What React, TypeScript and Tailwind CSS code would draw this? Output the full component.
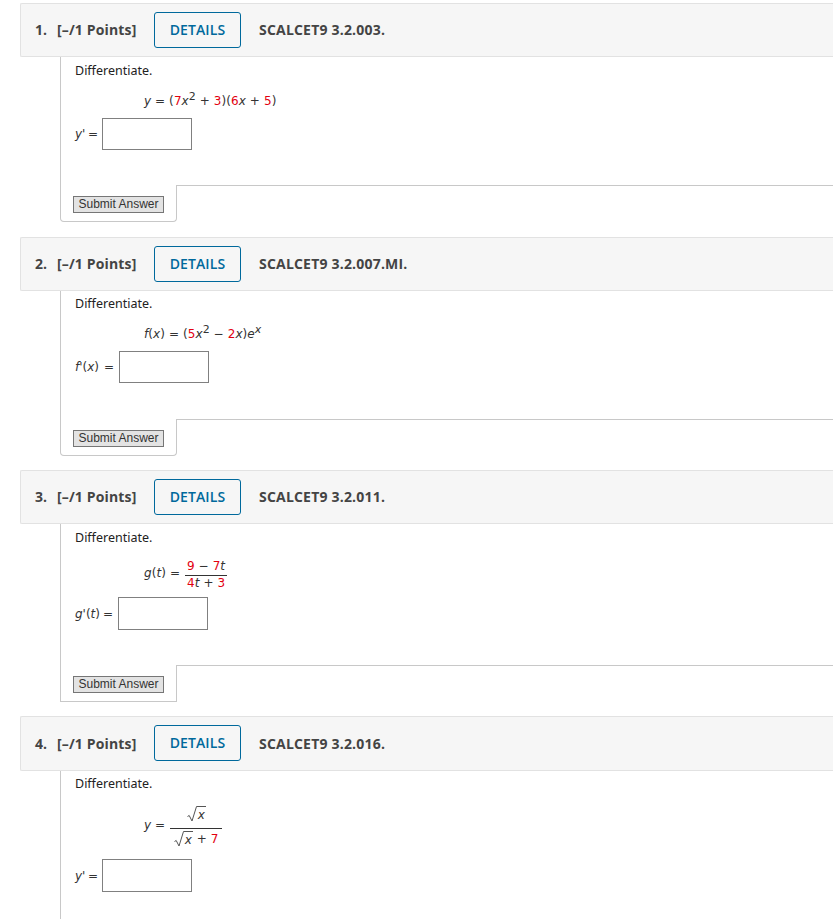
import React from 'react';

const R = ({ children }: { children: React.ReactNode }) => <span className="text-[#e3000f]">{children}</span>;
const V = ({ children }: { children: React.ReactNode }) => <i className="text-[#333]">{children}</i>;

const Sup = ({ children }: { children: React.ReactNode }) => (
  <span className="text-[11px] leading-none relative -top-[5px]">{children}</span>
);

const Root = ({ children }: { children: React.ReactNode }) => (
  <span className="inline-flex items-start">
    <svg width="10" height="16" viewBox="0 0 10 16" className="shrink-0">
      <path d="M0.5 10.5 L2.2 9.5 L5 15 L9.5 0.5 L10 0.5" fill="none" stroke="#555" strokeWidth="1" />
    </svg>
    <span className="border-t border-[#555] h-[16px] leading-[16px] w-[9px] text-center">{children}</span>
  </span>
);

const Answer = ({ label, labelWidth, gap = 'ml-[5px]', height }: { label: React.ReactNode; labelWidth: string; gap?: string; height: string }) => (
  <div className="flex items-center">
    <span className={`${labelWidth} flex justify-between font-['DejaVu_Sans',sans-serif] text-[12px] text-[#333] whitespace-nowrap`}>
      <span>{label}</span>
      <span>=</span>
    </span>
    <div className={`w-[90px] ${height} border border-[#808080] bg-white ${gap} shrink-0`} />
  </div>
);

interface QuestionProps {
  num: number;
  code: string;
  children: React.ReactNode;
  bodyClass: string;
  footer?: boolean;
  gapClass?: string;
  headerClass?: string;
  textPad?: string;
  footerRounded?: boolean;
}

const Question = ({ num, code, children, bodyClass, footer = true, gapClass = '', headerClass = 'h-[54px]', textPad = 'pb-[2px]', footerRounded = true }: QuestionProps) => (
  <section className={gapClass}>
    <div className={`ml-5 ${headerClass} bg-[#f6f6f6] border border-[#e2e2e2] border-r-0 rounded-l-[2px] flex items-center font-['Open_Sans',sans-serif] text-[14px] text-[#444] font-bold`}>
      <span className={`w-[21px] ml-[14px] ${textPad}`}>{num}.</span>
      <span className={`w-[97px] ml-[1px] tracking-[0.15px] ${textPad}`}>[–/1 Points]</span>
      <span className="w-[87px] h-[36px] border border-[#00699c] rounded-[3px] text-[#00699c] font-semibold tracking-[0.1px] flex items-center justify-center bg-[#f6f6f6] pb-px">DETAILS</span>
      <span className={`ml-[18px] tracking-[0.2px] ${textPad}`}>{code}</span>
    </div>
    <div className={`ml-[60px] border-l border-[#c8c8c8] pl-[14px] ${bodyClass}`}>
      <div className="font-['Noto_Sans','DejaVu_Sans',sans-serif] text-[12.5px] leading-[20px] text-[#222]">Differentiate.</div>
      {children}
    </div>
    {footer && (
      <div className="flex ml-[60px]">
        <div className={`w-[117px] h-[37px] border-l border-r border-b border-[#c8c8c8] shrink-0 pl-3 pt-[11px] ${footerRounded ? 'rounded-b-[4px]' : ''}`}>
          <button className="block w-[91px] h-[17px] bg-[#e3e3e3] border border-[#767676] font-['Liberation_Sans',sans-serif] text-[12px] leading-[15px] text-[#333] text-center">
            Submit Answer
          </button>
        </div>
        <div className="flex-1 border-t border-[#c8c8c8] -ml-px" />
      </div>
    )}
  </section>
);

const eq = "font-['DejaVu_Sans',sans-serif] text-[12px] tracking-[0.08px] text-[#333] ml-[69px] whitespace-nowrap";

const Frac = ({ top, bottom, width }: { top: React.ReactNode; bottom: React.ReactNode; width: string }) => (
  <span className={`inline-flex flex-col items-center ${width}`}>
    <span className="flex items-end h-[19px] leading-[18px]">{top}</span>
    <span className="w-full h-px bg-[#333]" />
    <span className="flex items-end h-[16px] leading-[18px]">{bottom}</span>
  </span>
);

export default function App() {
  return (
    <div className="w-[833px] h-[919px] overflow-hidden bg-white pt-[3px]">
      <Question num={1} code="SCALCET9 3.2.003." bodyClass="h-[128px] pt-[4px]">
        <div className={`${eq} mt-[10px] h-[20px] leading-[20px]`}>
          <V>y</V> = (<R>7</R><V>x</V><Sup>2</Sup> + <R>3</R>)(<R>6</R><V>x</V> + <R>5</R>)
        </div>
        <div className="mt-[7px]">
          <Answer label={<V>y'</V>} labelWidth="w-[23px]" gap="ml-[4px]" height="h-[32px]" />
        </div>
      </Question>

      <Question num={2} code="SCALCET9 3.2.007.MI." gapClass="mt-[15px]" bodyClass="h-[128px] pt-[3px]">
        <div className={`${eq} mt-[10px] h-[20px] leading-[20px]`}>
          <V>f</V>(<V>x</V>) = (<R>5</R><V>x</V><Sup>2</Sup> − <R>2</R><V>x</V>)<V>e</V><Sup><V>x</V></Sup>
        </div>
        <div className="mt-[7px]">
          <Answer label={<><V>f'</V>(<V>x</V>)</>} labelWidth="w-[39px]" height="h-[32px]" />
        </div>
      </Question>

      <Question num={3} code="SCALCET9 3.2.011." gapClass="mt-[14px]" bodyClass="h-[141px] pt-[4px]" footerRounded={false}>
        <div className={`${eq} mt-[8px] flex items-center h-[36px]`}>
          <span className="mr-[5px] pb-[2px]"><V>g</V>(<V>t</V>) =</span>
          <Frac width="w-[42px]" top={<span><R>9</R> − <R>7</R><V>t</V></span>} bottom={<span><R>4</R><V>t</V> + <R>3</R></span>} />
        </div>
        <div className="mt-[5px]">
          <Answer label={<><V>g'</V>(<V>t</V>)</>} labelWidth="w-[38px]" height="h-[33px]" />
        </div>
      </Question>

      <Question num={4} code="SCALCET9 3.2.016." gapClass="mt-[14px]" headerClass="h-[55px] pb-px" textPad="pb-0" bodyClass="h-[149px] pt-[3px]" footer={false}>
        <div className={`${eq} mt-[12px] flex items-center`}>
          <span className="mr-[5px] pb-[3px]"><V>y</V> =</span>
          <span className="inline-flex flex-col items-center w-[52px]">
            <span className="flex items-start h-[22px]"><Root><V>x</V></Root></span>
            <span className="w-full h-px bg-[#333]" />
            <span className="flex items-end h-[18px] whitespace-pre"><Root><V>x</V></Root><span className="leading-[16px]"> + <R>7</R></span></span>
          </span>
        </div>
        <div className="mt-[12px]">
          <Answer label={<V>y'</V>} labelWidth="w-[23px]" gap="ml-[4px]" height="h-[33px]" />
        </div>
      </Question>
    </div>
  );
}
